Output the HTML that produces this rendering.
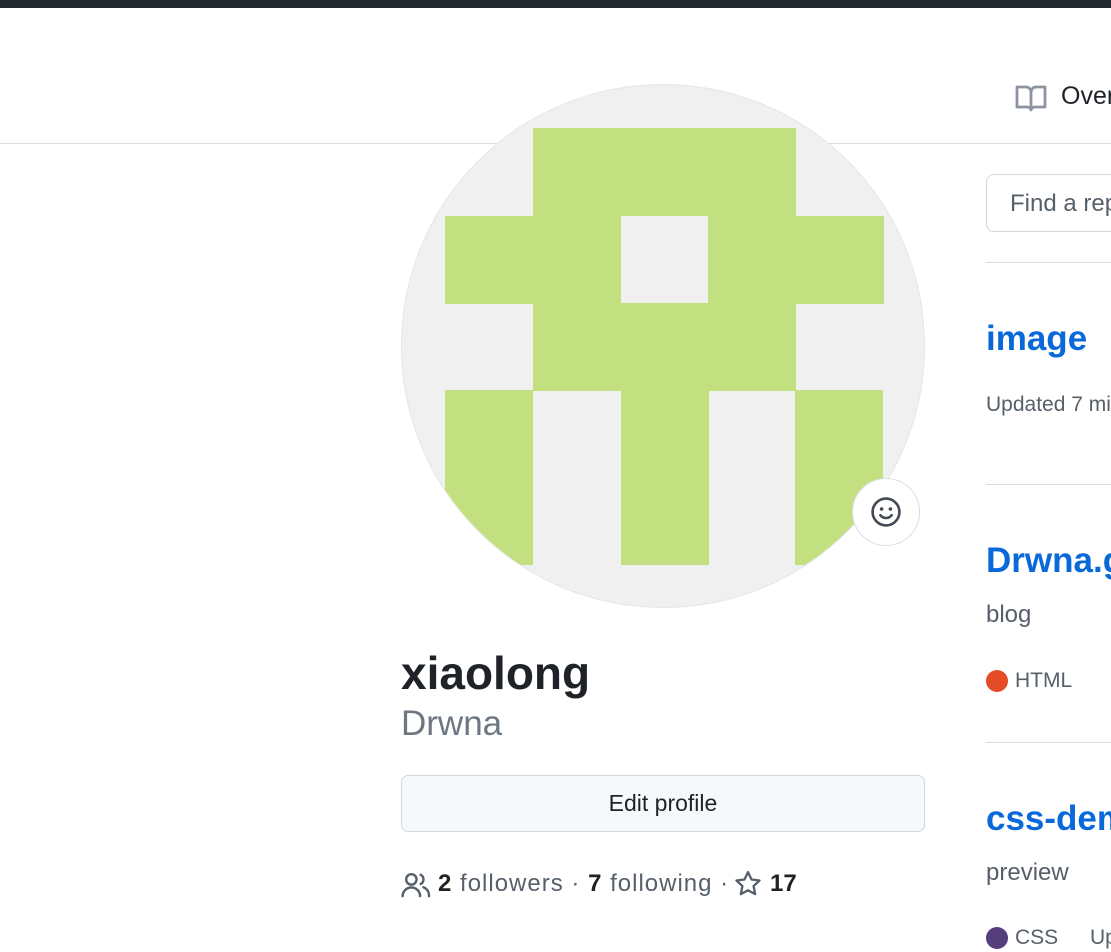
<!DOCTYPE html>
<html><head><meta charset="utf-8"><style>
*{margin:0;padding:0;box-sizing:border-box}
html{overflow:hidden;width:1111px;height:952px}
body{width:1111px;height:952px;overflow:hidden;background:#fff;font-family:"Liberation Sans",sans-serif;position:relative;color:#1f2328}
.a{position:absolute;white-space:nowrap}
.g{position:absolute;background:#c2e07f}
.blue{color:#0969da;font-weight:bold;font-size:35px}
.gray{color:#57606a}
.clip{position:absolute;left:960px;top:0;width:151px;height:952px;overflow:hidden}
.clip .a{left:26px}
</style></head><body>
<div class="a" style="left:0;top:0;width:1111px;height:8px;background:#24292f"></div>
<div class="a" style="left:0;top:143px;width:1111px;height:1px;background:#d8dee4"></div>
<div class="clip">
<svg class="a" style="left:55px;top:84px" width="32" height="28" viewBox="0 0 16 14"><path d="M1 1.5h4.5A2.5 2.5 0 0 1 8 4v9a2 2 0 0 0-2-1.5H1zM15 1.5h-4.5A2.5 2.5 0 0 0 8 4v9a2 2 0 0 1 2-1.5h5z" fill="none" stroke="#8c959f" stroke-width="1.4" stroke-linejoin="round"/></svg>
<div class="a" style="left:101px;top:82px;font-size:25px;color:#1f2328">Overview</div>
<div class="a" style="top:174px;width:200px;height:58px;border:1px solid #d0d7de;border-radius:8px"></div>
<div class="a gray" style="left:50px;top:190px;font-size:24px">Find a repository</div>
<div class="a" style="top:262px;width:200px;height:1px;background:#d8dee4"></div>
<div class="a blue" style="top:319px">image</div>
<div class="a gray" style="top:393px;font-size:21px">Updated 7 minutes ago</div>
<div class="a" style="top:484px;width:200px;height:1px;background:#d8dee4"></div>
<div class="a blue" style="top:541px">Drwna.github.io</div>
<div class="a gray" style="top:601px;font-size:24px">blog</div>
<div class="a" style="top:670px;width:22px;height:22px;border-radius:50%;background:#e34c26"></div>
<div class="a gray" style="left:55px;top:669px;font-size:21px">HTML</div>
<div class="a" style="top:742px;width:200px;height:1px;background:#d8dee4"></div>
<div class="a blue" style="top:799px">css-demo</div>
<div class="a gray" style="top:859px;font-size:24px">preview</div>
<div class="a" style="top:927px;width:22px;height:22px;border-radius:50%;background:#563d7c"></div>
<div class="a gray" style="left:55px;top:926px;font-size:21px">CSS</div>
<div class="a gray" style="left:130px;top:926px;font-size:21px">Updated</div>
</div>

<div class="a" style="left:401px;top:84px;width:524px;height:524px;border-radius:50%;background:#f0f0f0;overflow:hidden;border:1px solid #e6e6e6">
<div class="g" style="left:131px;top:43px;width:263px;height:88px"></div>
<div class="g" style="left:43px;top:131px;width:176px;height:88px"></div>
<div class="g" style="left:306px;top:131px;width:176px;height:88px"></div>
<div class="g" style="left:131px;top:218px;width:263px;height:88px"></div>
<div class="g" style="left:43px;top:305px;width:88px;height:175px"></div>
<div class="g" style="left:219px;top:305px;width:88px;height:175px"></div>
<div class="g" style="left:393px;top:305px;width:88px;height:175px"></div>
</div>
<div class="a" style="left:852px;top:478px;width:68px;height:68px;border-radius:50%;background:#fff;border:1px solid #d8dee4"></div>
<svg class="a" style="left:870px;top:496px" width="32" height="32" viewBox="0 0 16 16"><circle cx="8" cy="8" r="6.7" fill="none" stroke="#424a53" stroke-width="1.3"/><circle cx="5.8" cy="6.5" r="0.9" fill="#424a53"/><circle cx="10.2" cy="6.5" r="0.9" fill="#424a53"/><path d="M5.2 9.6a3.5 3.5 0 0 0 5.6 0" fill="none" stroke="#424a53" stroke-width="1.3" stroke-linecap="round"/></svg>

<div class="a" style="left:401px;top:646px;font-size:46px;font-weight:bold;color:#1f2328">xiaolong</div>
<div class="a" style="left:401px;top:704px;font-size:35px;color:#6e7781;font-weight:300">Drwna</div>
<div class="a" style="left:401px;top:775px;width:524px;height:57px;border:1px solid #d0d7de;border-radius:7px;background:#f6f8fa;text-align:center;line-height:55px;font-size:23px">Edit profile</div>
<svg class="a" style="left:401px;top:872px" width="30" height="26" viewBox="0 0 16 14"><circle cx="5.5" cy="4" r="2.8" fill="none" stroke="#57606a" stroke-width="1.3"/><path d="M0.8 13a4.7 4.7 0 0 1 9.4 0M10.5 1.5a2.8 2.8 0 0 1 0 5M12 8.2a4.7 4.7 0 0 1 3 4.8" fill="none" stroke="#57606a" stroke-width="1.3" stroke-linecap="round"/></svg>
<div class="a gray" style="left:438px;top:870px;font-size:24px;letter-spacing:1px"><b style="color:#1f2328">2</b> followers · <b style="color:#1f2328">7</b> following ·</div>
<svg class="a" style="left:734px;top:870px" width="28" height="28" viewBox="0 0 16 16"><path d="M8 1.2l2 4.2 4.6.6-3.4 3.2.9 4.6L8 11.6l-4.1 2.2.9-4.6L1.4 6l4.6-.6z" fill="none" stroke="#57606a" stroke-width="1.3" stroke-linejoin="round"/></svg>
<div class="a" style="left:770px;top:870px;font-size:24px;font-weight:bold">17</div>
</body></html>
